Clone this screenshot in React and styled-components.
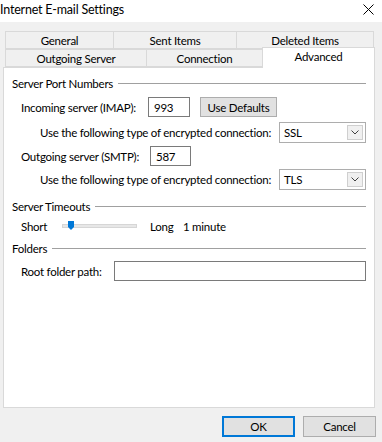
import React from 'react';
import styled, { createGlobalStyle } from 'styled-components';

const GlobalStyle = createGlobalStyle`
  html, body {
    margin: 0;
    padding: 0;
    background: #f0f0f0;
  }
  body {
    font-family: Lato, "Noto Sans", sans-serif;
    font-size: 11.5px;
    letter-spacing: -0.25px;
    color: #000;
  }
`;

const Window = styled.div`
  width: 382px;
  height: 442px;
  display: flex;
  flex-direction: column;
  background: #f0f0f0;
  overflow: hidden;
`;

const TitleBar = styled.div`
  height: 22px;
  background: #fff;
  display: flex;
  align-items: center;
  justify-content: space-between;
  padding: 0 8px 3px 0;
  box-sizing: border-box;
`;

const Title = styled.span`
  font-size: 12.5px;
  letter-spacing: -0.2px;
`;

const Body = styled.div`
  flex: 1;
  display: flex;
  flex-direction: column;
  padding-top: 9px;
`;

const TabStrip = styled.div`
  display: flex;
  flex-direction: column;
  padding-left: 5px;
`;

const TabRow = styled.div`
  display: flex;
  height: 18px;
  align-items: flex-end;
`;

const Tab = styled.div`
  box-sizing: border-box;
  width: ${p => p.w}px;
  height: ${p => (p.active ? 21 : 18)}px;
  margin-left: ${p => (p.first ? 0 : -1)}px;
  margin-bottom: ${p => (p.active ? -1 : 0)}px;
  border: 1px solid #d9d9d9;
  border-bottom: ${p => (p.active ? 'none' : '1px solid #d9d9d9')};
  background: ${p => (p.active ? '#fff' : '#f0f0f0')};
  display: flex;
  align-items: center;
  justify-content: center;
  padding-bottom: ${p => (p.active ? 4 : 0)}px;
  position: relative;
  z-index: ${p => (p.active ? 2 : 1)};
`;

const Panel = styled.div`
  box-sizing: border-box;
  margin-left: 3px;
  width: 372px;
  height: 341px;
  border: 1px solid #d9d9d9;
  background: #fff;
  padding: 7px 8px 0 8px;
  display: flex;
  flex-direction: column;
`;

const SectionHeader = styled.div`
  height: 16px;
  margin-top: ${p => p.mt || 0}px;
  display: flex;
  align-items: center;
  gap: 5px;
  &::after {
    content: '';
    flex: 1;
    border-top: 1px solid #a0a0a0;
  }
`;

const Row = styled.div`
  display: flex;
  align-items: center;
  height: ${p => p.h || 20}px;
  margin-top: ${p => p.mt || 0}px;
  padding-left: ${p => p.indent || 9}px;
`;

const Label = styled.span`
  width: ${p => (p.w ? `${p.w}px` : 'auto')};
  margin-left: ${p => p.ml || 0}px;
  flex-shrink: 0;
  white-space: nowrap;
`;

const TextBox = styled.div`
  box-sizing: border-box;
  width: ${p => p.w}px;
  height: ${p => p.h || 20}px;
  border: 1px solid #7a7a7a;
  background: #fff;
  display: flex;
  align-items: center;
  padding-left: 5px;
`;

const Button = styled.div`
  box-sizing: border-box;
  width: ${p => p.w}px;
  height: ${p => p.h || 20}px;
  margin-left: ${p => p.ml || 0}px;
  background: #e1e1e1;
  border: ${p => (p.primary ? '2px solid #0078d7' : '1px solid #adadad')};
  display: flex;
  align-items: center;
  justify-content: center;
`;

const Select = styled.div`
  box-sizing: border-box;
  width: 87px;
  height: 21px;
  margin-left: auto;
  border: 1px solid #adadad;
  background: #fff;
  display: flex;
  align-items: center;
  justify-content: space-between;
  padding: 0 2px 0 4px;
`;

const DropButton = styled.div`
  box-sizing: border-box;
  width: 16px;
  height: 15px;
  border: 1px solid #cfcfcf;
  background: #f0f0f0;
  display: flex;
  align-items: center;
  justify-content: center;
`;

const Slider = styled.div`
  width: 75px;
  height: 10px;
  margin-left: ${p => p.ml}px;
  display: flex;
  align-items: center;
  position: relative;
`;

const Track = styled.div`
  box-sizing: border-box;
  width: 100%;
  height: 4px;
  background: #e7e7e7;
  border: 1px solid #d6d6d6;
`;

const Thumb = styled.svg`
  position: absolute;
  left: 6px;
  top: 0;
`;

const Footer = styled.div`
  display: flex;
  justify-content: flex-end;
  gap: 8px;
  padding: 8px 6px 0 0;
`;

const Chevron = () => (
  <svg width="8" height="5" viewBox="0 0 8 5">
    <path d="M0.5 0.5 L4 4 L7.5 0.5" fill="none" stroke="#404040" strokeWidth="1" />
  </svg>
);

const ComboBox = ({ value }) => (
  <Select>
    <span>{value}</span>
    <DropButton>
      <Chevron />
    </DropButton>
  </Select>
);

const App = () => (
  <Window>
    <GlobalStyle />
    <TitleBar>
      <Title>Internet E-mail Settings</Title>
      <svg width="11" height="11" viewBox="0 0 11 11">
        <path d="M0.5 0.5 L10.5 10.5 M10.5 0.5 L0.5 10.5" stroke="#000" strokeWidth="1" />
      </svg>
    </TitleBar>
    <Body>
      <TabStrip>
        <TabRow>
          <Tab w={109} first>General</Tab>
          <Tab w={124}>Sent Items</Tab>
          <Tab w={138}>Deleted Items</Tab>
        </TabRow>
        <TabRow>
          <Tab w={142} first>Outgoing Server</Tab>
          <Tab w={117}>Connection</Tab>
          <Tab w={113} active>Advanced</Tab>
        </TabRow>
      </TabStrip>
      <Panel>
        <SectionHeader>Server Port Numbers</SectionHeader>
        <Row mt={6}>
          <Label w={127}>Incoming server (IMAP):</Label>
          <TextBox w={42}>993</TextBox>
          <Button w={77} ml={10}>Use Defaults</Button>
        </Row>
        <Row mt={5} h={21} indent={28}>
          <Label>Use the following type of encrypted connection:</Label>
          <ComboBox value="SSL" />
        </Row>
        <Row mt={3}>
          <Label w={129}>Outgoing server (SMTP):</Label>
          <TextBox w={41}>587</TextBox>
        </Row>
        <Row mt={3} h={21} indent={28}>
          <Label>Use the following type of encrypted connection:</Label>
          <ComboBox value="TLS" />
        </Row>
        <SectionHeader mt={8}>Server Timeouts</SectionHeader>
        <Row mt={4} h={16}>
          <Label w={32}>Short</Label>
          <Slider ml={9}>
            <Track />
            <Thumb width="6" height="9" viewBox="0 0 6 9">
              <path d="M0 0 H6 V6 L3 9 L0 6 Z" fill="#0078d7" />
            </Thumb>
          </Slider>
          <Label w={33} ml={13}>Long</Label>
          <Label>1 minute</Label>
        </Row>
        <SectionHeader mt={6}>Folders</SectionHeader>
        <Row mt={5}>
          <Label w={93}>Root folder path:</Label>
          <TextBox w={253} />
        </Row>
      </Panel>
      <Footer>
        <Button w={73} h={21} primary>OK</Button>
        <Button w={73} h={21}>Cancel</Button>
      </Footer>
    </Body>
  </Window>
);

export default App;
